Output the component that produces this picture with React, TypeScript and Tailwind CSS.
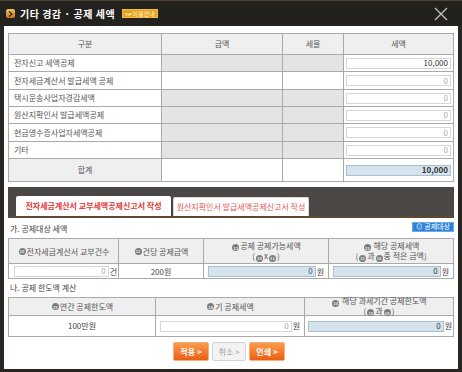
import React from "react";

const Num = ({ n }: { n: string }) => (
  <span className="inline-flex items-center justify-center w-[7px] h-[7px] rounded-full bg-[#7c7c7c] text-[#e8e8e8] text-[4px] leading-none font-bold mx-[1px] align-[-1px]">
    {n}
  </span>
);

const Input = ({
  value,
  blue,
  bold,
  dim,
  className,
}: {
  value: string;
  blue?: boolean;
  bold?: boolean;
  dim?: boolean;
  className?: string;
}) => (
  <div
    className={
      "h-[11px] flex items-center justify-end pr-[2px] text-[8px] leading-none border " +
      (blue ? "bg-[#d4e3ec] border-[#a9bfcd] " : "bg-white border-[#d6d6d6] ") +
      (bold ? "font-bold text-[#222] " : "") +
      (dim ? "text-[#aaaaaa] " : "text-[#333] ") +
      (className || "")
    }
  >
    {value}
  </div>
);

export default function App() {
  const rows: { label: string; white: boolean; value: string }[] = [
    { label: "전자신고 세액공제", white: false, value: "10,000" },
    { label: "전자세금계산서 발급세액 공제", white: true, value: "0" },
    { label: "택시운송사업자경감세액", white: false, value: "0" },
    { label: "원산지확인서 발급세액공제", white: false, value: "0" },
    { label: "현금영수증사업자세액공제", white: false, value: "0" },
    { label: "기타", white: false, value: "0" },
  ];

  return (
    <div className="w-[462px] h-[372px] bg-[#2a2622] flex flex-col font-['Noto_Sans_CJK_KR','Noto_Sans',sans-serif] text-[#555]">
      {/* Title bar */}
      <div className="h-[26px] shrink-0 bg-[#23211d] border-t border-[#4e4232] flex items-center pl-[6px] pr-[14px]">
        <div className="w-[9px] h-[9px] rounded-[2px] bg-gradient-to-b from-[#f3c25a] to-[#c07a18] flex items-center justify-center">
          <svg width="5" height="6" viewBox="0 0 5 6">
            <path d="M1 0.5 L4 3 L1 5.5" fill="none" stroke="#3a2a10" strokeWidth="1.4" />
          </svg>
        </div>
        <span className="ml-[5px] text-[10px] font-bold text-white leading-none tracking-[0.5px]">
          기타 경감 · 공제 세액
        </span>
        <span className="ml-[7px] h-[9px] px-[2px] bg-[#e6a21c] border border-[#f4c04a] flex items-center text-[6px] leading-none text-[#fff6d8]">
          <span className="text-[4px] font-bold mr-[1px]">TIP</span>이용안내
        </span>
        <div className="flex-1" />
        <svg width="14" height="14" viewBox="0 0 14 14">
          <path d="M1 1 L13 13 M13 1 L1 13" stroke="#c8c8c8" strokeWidth="1.2" />
        </svg>
      </div>

      {/* White panel */}
      <div className="flex-1 mx-[4px] mb-[3px] bg-white pl-[4px] pt-[7px] flex flex-col">
        {/* Top table */}
        <div className="w-[446px] grid grid-cols-[152px_120px_60px_109px] grid-rows-[20px_16px_17px_16px_16px_17px_16px_22px] gap-px p-px bg-[#a9a9a9] text-[8px] leading-none">
          <div className="bg-[#efefef] flex items-center justify-center">구분</div>
          <div className="bg-[#efefef] flex items-center justify-center">금액</div>
          <div className="bg-[#efefef] flex items-center justify-center">세율</div>
          <div className="bg-[#efefef] flex items-center justify-center">세액</div>
          {rows.map((r) => (
            <React.Fragment key={r.label}>
              <div className="bg-white flex items-center pl-[5px] text-[#555]">{r.label}</div>
              <div className={r.white ? "bg-white" : "bg-[#e4e4e4]"} />
              <div className={r.white ? "bg-white" : "bg-[#e4e4e4]"} />
              <div className="bg-white flex items-center pl-[2px] pr-[2px]">
                <Input value={r.value} dim={r.value === "0"} className="w-full" />
              </div>
            </React.Fragment>
          ))}
          <div className="bg-[#efefef] flex items-center justify-center">합계</div>
          <div className="bg-white" />
          <div className="bg-white" />
          <div className="bg-white flex items-center pl-[2px] pr-[2px]">
            <Input value="10,000" blue bold className="w-full" />
          </div>
        </div>

        {/* Tab bar */}
        <div className="w-[446px] mt-[5px] h-[31px] bg-[#4a4744] border-b-2 border-[#5e4733] flex items-end pl-[8px] gap-[2px]">
          <div className="w-[155px] h-[20px] bg-white rounded-t-[2px] flex items-center justify-center text-[8px] font-bold text-[#e23a3a] leading-none">
            전자세금계산서 교부세액공제신고서 작성
          </div>
          <div className="w-[136px] h-[19px] bg-white border border-b-0 border-[#d8d8d8] rounded-t-[2px] flex items-center justify-center text-[8px] text-[#e25858] leading-none">
            원산지확인서 발급세액공제신고서 작성
          </div>
        </div>

        {/* 가. */}
        <div className="w-[446px] h-[20px] flex items-center justify-between pl-[2px] text-[8px] leading-none text-[#444]">
          <span className="mt-[1px]">가. 공제대상 세액</span>
          <span className="h-[10px] px-[3px] bg-[#2f82d6] border border-[#6aaae8] text-white text-[7px] flex items-center leading-none -mt-[3px]">
            ⊙ 공제대상
          </span>
        </div>

        {/* Table 2 */}
        <div className="w-[446px] grid grid-cols-[109px_84px_124px_124px] grid-rows-[24px_14px] gap-px p-px bg-[#a9a9a9] text-[8px] leading-[9px]">
          <div className="bg-[#efefef] flex items-center justify-center">
            <Num n="10" /> 전자세금계산서 교부건수
          </div>
          <div className="bg-[#efefef] flex items-center justify-center">
            <Num n="11" /> 건당 공제금액
          </div>
          <div className="bg-[#efefef] flex flex-col items-center justify-center">
            <span>
              <Num n="12" />
              공제 공제가능세액
            </span>
            <span>
              (<Num n="10" />x<Num n="11" />)
            </span>
          </div>
          <div className="bg-[#efefef] flex flex-col items-center justify-center">
            <span>
              <Num n="13" /> 해당 공제세액
            </span>
            <span>
              (<Num n="12" />과<Num n="14" />중 적은 금액)
            </span>
          </div>
          <div className="bg-white flex items-center pl-[5px] pr-[1px] gap-[1px]">
            <Input value="0" dim className="flex-1" />
            <span className="text-[#444]">건</span>
          </div>
          <div className="bg-white flex items-center justify-center text-[#444]">200원</div>
          <div className="bg-white flex items-center pl-[4px] pr-[4px] gap-[1px]">
            <Input value="0" blue className="flex-1 text-[#555]" />
            <span className="text-[#444]">원</span>
          </div>
          <div className="bg-white flex items-center pl-[4px] pr-[4px] gap-[1px]">
            <Input value="0" blue className="flex-1" />
            <span className="text-[#444]">원</span>
          </div>
        </div>

        {/* 나. */}
        <div className="w-[446px] h-[18px] flex items-center pl-[2px] text-[8px] leading-none text-[#444]">
          나. 공제 한도액 계산
        </div>

        {/* Table 3 */}
        <div className="w-[446px] grid grid-cols-[146px_148px_148px] grid-rows-[17px_20px] gap-px p-px bg-[#a9a9a9] text-[8px] leading-[8px]">
          <div className="bg-[#efefef] flex items-center justify-center">
            <Num n="15" /> 연간 공제한도액
          </div>
          <div className="bg-[#efefef] flex items-center justify-center">
            <Num n="16" />기 공제세액
          </div>
          <div className="bg-[#efefef] flex flex-col items-center justify-center">
            <span>
              <Num n="14" /> 해당 과세기간 공제한도액
            </span>
            <span>
              (<Num n="15" />과<Num n="16" />)
            </span>
          </div>
          <div className="bg-white flex items-center justify-center text-[#444]">100만원</div>
          <div className="bg-white flex items-center pl-[4px] pr-[4px] gap-[1px]">
            <Input value="0" dim className="flex-1" />
            <span className="text-[#444]">원</span>
          </div>
          <div className="bg-white flex items-center pl-[3px] pr-[1px] gap-[1px]">
            <Input value="0" blue className="flex-1" />
            <span className="text-[#444]">원</span>
          </div>
        </div>

        {/* Buttons */}
        <div className="w-[446px] mt-[5px] flex justify-center gap-[3px] pr-[4px]">
          <button className="w-[36px] h-[19px] rounded-[2px] bg-gradient-to-b from-[#fb9a4a] to-[#ea5e12] border border-[#f3b07a] text-white text-[8px] font-bold leading-none flex items-center justify-center">
            적용 &gt;
          </button>
          <button className="w-[34px] h-[19px] rounded-[2px] bg-[#f3f3f3] border border-[#d2d2d2] text-[#9a9a9a] text-[8px] leading-none flex items-center justify-center">
            취소 &gt;
          </button>
          <button className="w-[36px] h-[19px] rounded-[2px] bg-gradient-to-b from-[#fb9a4a] to-[#ea5e12] border border-[#f3b07a] text-white text-[8px] font-bold leading-none flex items-center justify-center">
            인쇄 &gt;
          </button>
        </div>
      </div>
    </div>
  );
}
